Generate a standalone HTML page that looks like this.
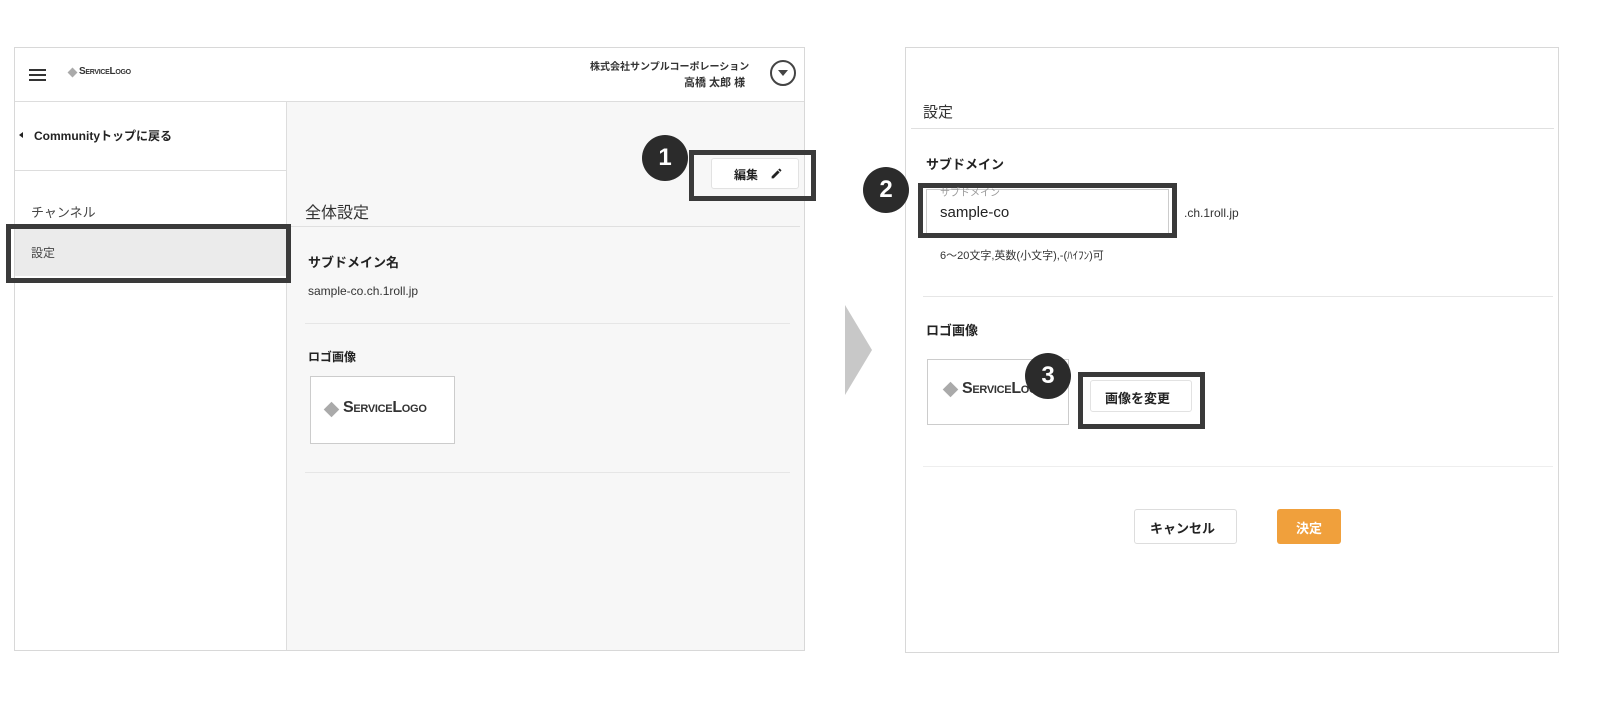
<!DOCTYPE html>
<html><head><meta charset="utf-8"><style>
*{box-sizing:border-box;margin:0;padding:0}
body{width:1608px;height:724px;background:#fff;position:relative;font-family:"Liberation Sans","Noto Sans CJK JP",sans-serif;color:#222;overflow:hidden}
.a{position:absolute}
.t{position:absolute;white-space:nowrap}
.circ{position:absolute;width:46px;height:46px;border-radius:50%;background:#2b2b2b;color:#fff;font-weight:bold;font-size:24px;text-align:center;line-height:46px;z-index:5}
.dk{position:absolute;border:5px solid #3a3a3a;z-index:4}
.sc{font-variant:small-caps;font-weight:bold;letter-spacing:-0.3px}
</style></head><body>
<div class="a" style="left:14px;top:47px;width:791px;height:604px;border:1px solid #d8d8d8;background:#fff"></div>
<div class="a" style="left:15px;top:101px;width:789px;height:1px;background:#ddd"></div>
<div class="a" style="left:29px;top:69px;width:17px;height:2px;background:#333"></div>
<div class="a" style="left:29px;top:74px;width:17px;height:2px;background:#333"></div>
<div class="a" style="left:29px;top:79px;width:17px;height:2px;background:#333"></div>
<div class="a" style="left:69px;top:69px;width:7px;height:7px;background:#aaa;transform:rotate(45deg)"></div>
<div class="t sc" style="left:79px;top:66px;font-size:10px;color:#333">ServiceLogo</div>
<div class="t" style="left:590px;top:58px;font-size:10px;font-weight:bold;color:#333">株式会社サンプルコーポレーション</div>
<div class="t" style="left:684px;top:74px;font-size:11px;font-weight:bold;color:#333">高橋 太郎 様</div>
<div class="a" style="left:770px;top:60px;width:26px;height:26px;border:2px solid #444;border-radius:50%"></div>
<div class="a" style="left:778px;top:70px;width:0;height:0;border-left:5px solid transparent;border-right:5px solid transparent;border-top:6px solid #444"></div>
<div class="a" style="left:286px;top:102px;width:518px;height:548px;background:#f7f7f7;border-left:1px solid #ddd"></div>
<div class="a" style="left:15px;top:170px;width:271px;height:1px;background:#ddd"></div>
<div class="a" style="left:19px;top:132px;width:0;height:0;border-top:3px solid transparent;border-bottom:3px solid transparent;border-right:4px solid #222"></div>
<div class="t" style="left:34px;top:127px;font-size:12px;font-weight:bold">Communityトップに戻る</div>
<div class="t" style="left:31px;top:202px;font-size:13px;color:#444">チャンネル</div>
<div class="a" style="left:15px;top:229px;width:271px;height:47px;background:#ebebeb"></div>
<div class="t" style="left:31px;top:244px;font-size:12px;color:#444">設定</div>
<div class="dk" style="left:6px;top:224px;width:285px;height:59px"></div>
<div class="a" style="left:711px;top:158px;width:88px;height:31px;background:#fff;border:1px solid #e2e2e2;border-radius:3px"></div>
<div class="t" style="left:734px;top:166px;font-size:12px;font-weight:bold">編集</div>
<svg class="a" style="left:770px;top:167px" width="13" height="13" viewBox="0 0 24 24"><path d="M3 17.25V21h3.75L17.8 9.94l-3.75-3.75L3 17.25zM20.7 7.04a1 1 0 000-1.41l-2.34-2.340a1 1 0 00-1.41 0l-1.83 1.83 3.75 3.75 1.83-1.830z" fill="#222"/></svg>
<div class="dk" style="left:689px;top:150px;width:127px;height:51px"></div>
<div class="circ" style="left:642px;top:135px">1</div>
<div class="t" style="left:305px;top:199px;font-size:16px;color:#333">全体設定</div>
<div class="a" style="left:290px;top:226px;width:510px;height:1px;background:#e0e0e0"></div>
<div class="t" style="left:308px;top:252px;font-size:13px;font-weight:bold">サブドメイン名</div>
<div class="t" style="left:308px;top:284px;font-size:12px;color:#333">sample-co.ch.1roll.jp</div>
<div class="a" style="left:305px;top:323px;width:485px;height:1px;background:#e6e6e6"></div>
<div class="t" style="left:308px;top:348px;font-size:12px;font-weight:bold">ロゴ画像</div>
<div class="a" style="left:310px;top:376px;width:145px;height:68px;background:#fff;border:1px solid #ccc"></div>
<div class="a" style="left:326px;top:404px;width:11px;height:11px;background:#aaa;transform:rotate(45deg)"></div>
<div class="t sc" style="left:343px;top:399px;font-size:16px;color:#333">ServiceLogo</div>
<div class="a" style="left:305px;top:472px;width:485px;height:1px;background:#e6e6e6"></div>
<div class="a" style="left:845px;top:305px;width:0;height:0;border-top:45px solid transparent;border-bottom:45px solid transparent;border-left:27px solid #c8c8c8"></div>
<div class="a" style="left:905px;top:47px;width:654px;height:606px;border:1px solid #d8d8d8;background:#fff"></div>
<div class="t" style="left:923px;top:101px;font-size:15px;color:#333">設定</div>
<div class="a" style="left:911px;top:128px;width:643px;height:1px;background:#e0e0e0"></div>
<div class="t" style="left:926px;top:154px;font-size:13px;font-weight:bold">サブドメイン</div>
<div class="a" style="left:926px;top:189px;width:243px;height:47px;border:1px solid #ccc;background:#fff"></div>
<div class="t" style="left:940px;top:184px;font-size:10px;color:#999;z-index:6">サブドメイン</div>
<div class="t" style="left:940px;top:204px;font-size:15px;color:#222">sample-co</div>
<div class="dk" style="left:918px;top:183px;width:259px;height:55px"></div>
<div class="circ" style="left:863px;top:167px">2</div>
<div class="t" style="left:1184px;top:206px;font-size:12px;color:#333">.ch.1roll.jp</div>
<div class="t" style="left:940px;top:247px;font-size:11px;color:#333">6〜20文字,英数(小文字),-(ﾊｲﾌﾝ)可</div>
<div class="a" style="left:923px;top:296px;width:630px;height:1px;background:#e6e6e6"></div>
<div class="t" style="left:926px;top:320px;font-size:13px;font-weight:bold">ロゴ画像</div>
<div class="a" style="left:927px;top:359px;width:142px;height:66px;background:#fff;border:1px solid #ccc"></div>
<div class="a" style="left:945px;top:384px;width:11px;height:11px;background:#aaa;transform:rotate(45deg)"></div>
<div class="t sc" style="left:962px;top:380px;font-size:16px;color:#333">ServiceLogo</div>
<div class="circ" style="left:1025px;top:353px">3</div>
<div class="a" style="left:1090px;top:380px;width:102px;height:32px;background:#fff;border:1px solid #e2e2e2;border-radius:3px;z-index:3"></div>
<div class="t" style="left:1105px;top:388px;font-size:13px;font-weight:bold;z-index:3">画像を変更</div>
<div class="dk" style="left:1078px;top:372px;width:127px;height:57px"></div>
<div class="a" style="left:923px;top:466px;width:630px;height:1px;background:#eee"></div>
<div class="a" style="left:1134px;top:509px;width:103px;height:35px;border:1px solid #ddd;border-radius:3px;background:#fff"></div>
<div class="t" style="left:1150px;top:518px;font-size:13px;font-weight:bold">キャンセル</div>
<div class="a" style="left:1277px;top:509px;width:64px;height:35px;border-radius:3px;background:#f0a03c"></div>
<div class="t" style="left:1296px;top:518px;font-size:13px;font-weight:bold;color:#fff">決定</div>
</body></html>
